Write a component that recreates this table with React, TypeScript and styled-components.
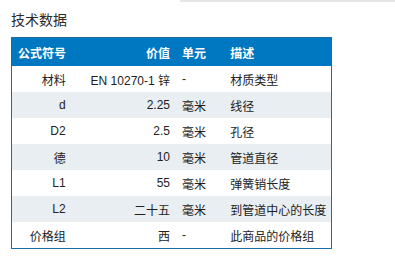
import { createGlobalStyle, styled } from 'styled-components'

interface SpecRow {
  symbol: string
  value: string
  unit: string
  desc: string
}

const rows: SpecRow[] = [
  { symbol: '材料', value: 'EN 10270-1 锌', unit: '-', desc: '材质类型' },
  { symbol: 'd', value: '2.25', unit: '毫米', desc: '线径' },
  { symbol: 'D2', value: '2.5', unit: '毫米', desc: '孔径' },
  { symbol: '德', value: '10', unit: '毫米', desc: '管道直径' },
  { symbol: 'L1', value: '55', unit: '毫米', desc: '弹簧销长度' },
  { symbol: 'L2', value: '二十五', unit: '毫米', desc: '到管道中心的长度' },
  { symbol: '价格组', value: '西', unit: '-', desc: '此商品的价格组' },
]

export default function App() {
  return (
    <>
      <GlobalStyle />
      <TopRule />
      <Section>
        <Title>技术数据</Title>
        <SpecTable>
          <colgroup>
            <col style={{ width: 60 }} />
            <col style={{ width: 104 }} />
            <col style={{ width: 48 }} />
            <col style={{ width: 107 }} />
          </colgroup>
          <thead>
            <tr>
              <HeadCell $align="left">公式符号</HeadCell>
              <HeadCell $align="right">价值</HeadCell>
              <HeadCell $align="left">单元</HeadCell>
              <HeadCell $align="left">描述</HeadCell>
            </tr>
          </thead>
          <tbody>
            {rows.map((r) => (
              <BodyRow key={r.symbol}>
                <Cell $align="right">{r.symbol}</Cell>
                <Cell $align="right">{r.value}</Cell>
                <Cell $align="left">{r.unit}</Cell>
                <Cell $align="left">{r.desc}</Cell>
              </BodyRow>
            ))}
          </tbody>
        </SpecTable>
      </Section>
    </>
  )
}

/** style */

const GlobalStyle = createGlobalStyle`
  body {
    margin: 0;
    background: #fff;
    font-family: 'Liberation Sans', Arial, 'Noto Sans CJK SC', sans-serif;
    color: #222;
  }
`

const TopRule = styled.div`
  margin-left: 180px;
  height: 2px;
  background: #e6e6e6;
`

const Section = styled.div`
  padding: 10px 0 0 11px;
`

const Title = styled.h3`
  margin: 0 0 9px;
  font-size: 14px;
  line-height: 16px;
  font-weight: normal;
  color: #2a2a2a;
`

const SpecTable = styled.table`
  width: 321px;
  table-layout: fixed;
  border-collapse: collapse;
  border: 1px solid #1a6ea8;
  font-size: 12px;
`

const HeadCell = styled.th<{ $align: 'left' | 'right' }>`
  height: 28px;
  padding: 0 6px;
  background: #0077c1;
  color: #fff;
  font-weight: bold;
  text-align: ${(p) => p.$align};
  white-space: nowrap;
`

const BodyRow = styled.tr`
  &:nth-child(even) {
    background: #e9eef2;
  }
`

const Cell = styled.td<{ $align: 'left' | 'right' }>`
  height: 26px;
  padding: 0 6px;
  text-align: ${(p) => p.$align};
  white-space: nowrap;
  color: #222;
`
